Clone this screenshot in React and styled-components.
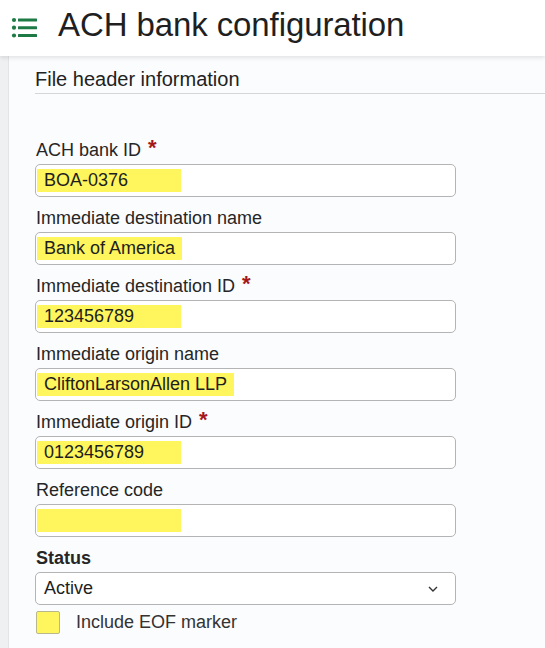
import styled, { createGlobalStyle } from "styled-components";

const GlobalStyle = createGlobalStyle`
  html, body {
    margin: 0;
    padding: 0;
    background: #fbfcfd;
    font-family: "Liberation Sans", Arial, sans-serif;
    color: #333;
  }
`;

const fields = [
  { label: "ACH bank ID", value: "BOA-0376", required: true },
  { label: "Immediate destination name", value: "Bank of America" },
  { label: "Immediate destination ID", value: "123456789", required: true },
  { label: "Immediate origin name", value: "CliftonLarsonAllen LLP" },
  { label: "Immediate origin ID", value: "0123456789", required: true },
  { label: "Reference code", value: "" },
];

export default function App() {
  return (
    <Page>
      <GlobalStyle />
      <Header>
        <MenuIcon />
        <Title>ACH bank configuration</Title>
      </Header>
      <Body>
        <Rail />
        <Content>
          <SectionTitle>File header information</SectionTitle>
          <Form>
            {fields.map((f) => (
              <Field key={f.label}>
                <Label>
                  {f.label}
                  {f.required && <Required>*</Required>}
                </Label>
                <InputBox>
                  <Highlight>{f.value}</Highlight>
                </InputBox>
              </Field>
            ))}
            <Field>
              <Label $bold>Status</Label>
              <SelectBox>
                <span>Active</span>
                <Chevron />
              </SelectBox>
            </Field>
            <CheckRow>
              <CheckBox />
              <CheckText>Include EOF marker</CheckText>
            </CheckRow>
          </Form>
        </Content>
      </Body>
    </Page>
  );
}

function MenuIcon() {
  return (
    <IconSvg width="26" height="22" viewBox="0 0 26 22">
      <circle cx="3" cy="3" r="2.1" />
      <circle cx="3" cy="10.7" r="2.1" />
      <circle cx="3" cy="18.5" r="2.1" />
      <rect x="7" y="1.5" width="19" height="3" rx="0.5" />
      <rect x="7" y="9.2" width="19" height="3" rx="0.5" />
      <rect x="7" y="17" width="19" height="3" rx="0.5" />
    </IconSvg>
  );
}

function Chevron() {
  return (
    <ChevronSvg width="10" height="6" viewBox="0 0 10 6">
      <path d="M1 1l4 4 4-4" fill="none" stroke="#333" strokeWidth="1.4" />
    </ChevronSvg>
  );
}

const Page = styled.div`
  min-height: 100vh;
  display: flex;
  flex-direction: column;
`;

const Header = styled.header`
  height: 56px;
  box-sizing: border-box;
  padding: 0 0 6px 11px;
  display: flex;
  align-items: center;
  gap: 21px;
  background: #fff;
  box-shadow: 0 2px 4px rgba(0, 0, 0, 0.1);
  position: relative;
  z-index: 1;
`;

const IconSvg = styled.svg`
  fill: #1d7a45;
  margin-top: 6px;
  flex-shrink: 0;
`;

const Title = styled.h1`
  margin: 0;
  font-size: 33px;
  font-weight: normal;
  color: #1f1f1f;
  letter-spacing: -0.1px;
`;

const Body = styled.div`
  flex: 1;
  display: flex;
`;

const Rail = styled.div`
  width: 8px;
  background: #eff0f2;
  border-right: 1px solid #e2e4e6;
`;

const Content = styled.main`
  flex: 1;
  padding: 11px 0 0 26px;
`;

const SectionTitle = styled.h2`
  margin: 0;
  font-size: 20px;
  line-height: 24px;
  font-weight: normal;
  color: #222;
  padding-bottom: 2px;
  border-bottom: 1px solid #d4d6d8;
`;

const Form = styled.div`
  width: 421px;
  margin-top: 45px;
  display: flex;
  flex-direction: column;
  gap: 10px;
`;

const Field = styled.div`
  display: flex;
  flex-direction: column;
  gap: 3px;
`;

const Label = styled.label`
  font-size: 18px;
  line-height: 22px;
  height: 22px;
  color: #262626;
  font-weight: ${(p) => (p.$bold ? "bold" : "normal")};
  margin-left: 1px;
`;

const Required = styled.span`
  color: #a5161b;
  font-weight: bold;
  font-size: 22px;
  line-height: 0;
  margin-left: 7px;
  position: relative;
  top: -1px;
`;

const InputBox = styled.div`
  height: 33px;
  box-sizing: border-box;
  border: 1px solid #b4b4b4;
  border-radius: 5px;
  background: #fff;
  display: flex;
  align-items: center;
  padding: 0 1px;
`;

const Highlight = styled.span`
  display: inline-block;
  box-sizing: border-box;
  min-width: 144px;
  height: 23px;
  line-height: 23px;
  padding: 0 7px;
  background: #fff55c;
  font-size: 18px;
  color: #1e1e1e;
  white-space: nowrap;
`;

const SelectBox = styled.div`
  height: 33px;
  box-sizing: border-box;
  border: 1px solid #b4b4b4;
  border-radius: 5px;
  background: #fff;
  display: flex;
  align-items: center;
  justify-content: space-between;
  padding: 0 17px 0 8px;
  font-size: 18px;
  color: #1e1e1e;
`;

const ChevronSvg = styled.svg`
  display: block;
`;

const CheckRow = styled.div`
  display: flex;
  align-items: center;
  gap: 16px;
  margin-top: -4px;
  padding-left: 1px;
`;

const CheckBox = styled.span`
  width: 24px;
  height: 23px;
  box-sizing: border-box;
  background: #fff55c;
  border: 1px solid #b9b78c;
  border-radius: 2px;
`;

const CheckText = styled.span`
  font-size: 18px;
  color: #333;
`;
